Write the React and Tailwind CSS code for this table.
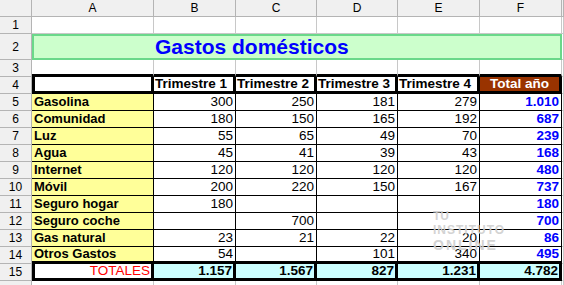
import React from 'react'

const COLS = ['A', 'B', 'C', 'D', 'E', 'F']

const DATA = [
  ['Gasolina', '300', '250', '181', '279', '1.010'],
  ['Comunidad', '180', '150', '165', '192', '687'],
  ['Luz', '55', '65', '49', '70', '239'],
  ['Agua', '45', '41', '39', '43', '168'],
  ['Internet', '120', '120', '120', '120', '480'],
  ['Móvil', '200', '220', '150', '167', '737'],
  ['Seguro hogar', '180', '', '', '', '180'],
  ['Seguro coche', '', '700', '', '', '700'],
  ['Gas natural', '23', '21', '22', '20', '86'],
  ['Otros Gastos', '54', '', '101', '340', '495'],
]

const TOTALS = ['1.157', '1.567', '827', '1.231', '4.782']

// cabecera de fila / columna gris
function Hdr({ children }) {
  return (
    <div className="flex items-center justify-center border-r border-b border-[#b4b4b4] bg-[#f0f0f0] text-[12px] text-black">
      {children}
    </div>
  )
}

function Blank({ thickBottom }) {
  return (
    <div
      className={
        thickBottom
          ? 'border-r border-r-[#c8c8c8] border-b-[3px] border-b-black'
          : 'border-r border-b border-[#c8c8c8]'
      }
    />
  )
}

export default function App() {
  return (
    <div
      className="relative h-[285px] w-[564px] overflow-hidden bg-white"
      style={{ fontFamily: '"Liberation Sans", Arial, sans-serif' }}
    >
      <div className="grid grid-cols-[32px_122px_82px_81px_81px_82px_82px_1fr] grid-rows-[17px_17px_26px_17px_17px_repeat(11,17px)_17px]">
        {/* cabecera de columnas */}
        <Hdr />
        {COLS.map((c) => (
          <Hdr key={c}>{c}</Hdr>
        ))}
        <Hdr />

        {/* fila 1 */}
        <Hdr>1</Hdr>
        {COLS.map((c) => (
          <Blank key={c} />
        ))}
        <Blank />

        {/* fila 2: título */}
        <Hdr>2</Hdr>
        <div className="col-span-6 flex items-center border-2 border-[#6ad88a] bg-[#ccffcc] pl-[121px]">
          <span className="text-[21px] font-bold text-[#0000ff]">Gastos domésticos</span>
        </div>
        <Blank />

        {/* fila 3 */}
        <Hdr>3</Hdr>
        {COLS.map((c) => (
          <Blank key={c} thickBottom />
        ))}
        <Blank />

        {/* fila 4: encabezados */}
        <Hdr>4</Hdr>
        <div className="border-l-[3px] border-r-[3px] border-b-[3px] border-black bg-white" />
        {['Trimestre 1', 'Trimestre 2', 'Trimestre 3', 'Trimestre 4'].map((t) => (
          <div
            key={t}
            className="flex items-center border-r-[3px] border-b-[3px] border-black bg-white pl-[1px] text-[13.5px] font-bold text-black whitespace-nowrap"
          >
            {t}
          </div>
        ))}
        <div className="flex items-center justify-center border-r-[3px] border-b-[3px] border-black bg-[#993300] text-[13.5px] font-bold text-white">
          Total año
        </div>
        <Blank />

        {/* filas de datos */}
        {DATA.map((row, i) => {
          const last = i === DATA.length - 1
          const bottom = last ? 'border-b-[3px]' : 'border-b'
          return (
            <React.Fragment key={row[0]}>
              <Hdr>{i + 5}</Hdr>
              <div
                className={`flex items-center border-r border-black ${bottom} bg-[#ffff99] pl-[2px] text-[13px] font-bold text-black whitespace-nowrap`}
              >
                {row[0]}
              </div>
              {row.slice(1, 5).map((v, j) => (
                <div
                  key={j}
                  className={`flex items-center justify-end border-r border-black ${bottom} pr-[2px] text-[13.5px] text-black`}
                >
                  {v}
                </div>
              ))}
              <div
                className={`flex items-center justify-end border-r border-black ${bottom} pr-[2px] text-[13.5px] font-bold text-[#0000ff]`}
              >
                {row[5]}
              </div>
              <Blank />
            </React.Fragment>
          )
        })}

        {/* fila 15: totales */}
        <Hdr>15</Hdr>
        <div className="flex items-center justify-end border-l-[3px] border-r-[3px] border-b-[3px] border-black bg-white pr-[1px] text-[13.5px] text-[#ff0000]">
          TOTALES
        </div>
        {TOTALS.map((v) => (
          <div
            key={v}
            className="flex items-center justify-end border-r-[3px] border-b-[3px] border-black bg-[#ccffff] pr-[1px] text-[13.5px] font-bold text-black"
          >
            {v}
          </div>
        ))}
        <Blank />

        {/* fila 16 (cortada, sin número visible) */}
        <Hdr />
        {COLS.map((c) => (
          <Blank key={c} />
        ))}
        <Blank />
      </div>

      {/* marca de agua */}
      <div className="pointer-events-none absolute left-[433px] top-[209px] flex flex-col items-start font-bold text-[#cfcfcf] opacity-90">
        <span className="text-[12px] leading-[14px]">TU</span>
        <span className="text-[12px] leading-[14px] tracking-[1px]">INSTITUTO</span>
        <span className="text-[14px] leading-[16px] tracking-[2px]">ONLINE</span>
      </div>
    </div>
  )
}
